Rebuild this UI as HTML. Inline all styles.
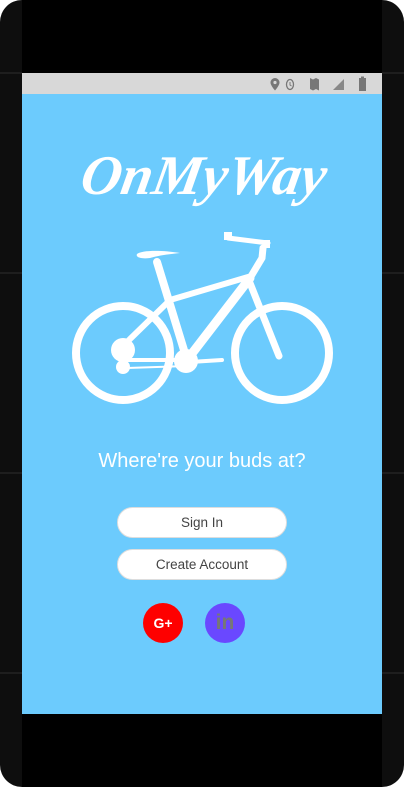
<!DOCTYPE html>
<html><head><meta charset="utf-8"><style>
html,body{margin:0;padding:0;background:#fff;width:404px;height:787px;overflow:hidden}
.frame{position:absolute;left:0;top:0;width:404px;height:787px;background:#0e0e0e;border-radius:22px}
.line{position:absolute;height:2px;background:#1e1e1e;width:404px;left:0}
.screen{position:absolute;left:22px;top:0;width:360px;height:787px;background:#000}
.status{position:absolute;left:22px;top:73px;width:360px;height:21px;background:#d8d8d8}
.blue{position:absolute;left:22px;top:94px;width:360px;height:620px;background:#6ccbfd}
.title{position:absolute;left:24px;width:360px;top:144px;text-align:center;color:#fff;font-family:"Liberation Serif",serif;font-style:italic;font-weight:bold;font-size:56px;letter-spacing:0px;transform:skewX(-10deg)}
.tag{position:absolute;left:22px;width:360px;top:450px;text-align:center;color:#fff;font-family:"Liberation Sans",sans-serif;font-size:20px}
.btn{position:absolute;left:117px;width:170px;height:31px;background:#fff;border:1px solid #ddd;border-radius:16px;box-sizing:border-box;text-align:center;line-height:30px;color:#444;font-family:"Liberation Sans",sans-serif;font-size:13.5px}
.c{position:absolute;width:40px;height:40px;border-radius:50%;text-align:center;line-height:40px;font-family:"Liberation Sans",sans-serif;font-weight:bold}
</style></head><body>
<div class="frame"></div>
<div class="line" style="top:72px"></div><div class="line" style="top:272px"></div><div class="line" style="top:472px"></div><div class="line" style="top:672px"></div>
<div class="screen"></div>
<div class="status">
<svg width="360" height="21" style="position:absolute;left:0;top:0">
<g fill="#777">
<path d="M253 5a4.5 4.5 0 0 1 4.5 4.5c0 3-4.5 8-4.5 8s-4.5-5-4.5-8a4.5 4.5 0 0 1 4.5-4.5z"/><circle cx="253" cy="9.5" r="1.6" fill="#d8d8d8"/>
<ellipse cx="268" cy="11.5" rx="3.5" ry="5" fill="none" stroke="#777" stroke-width="1.3"/><path d="M268 9v3l1.5 1" stroke="#777" fill="none"/>
<path d="M288 5l3 1.5 3-1.5 3 1.5v11l-3-1.5-3 1.5-3-1.5z"/>
<path d="M322 17h-11l11-11z" fill="#888"/>
<rect x="337" y="5" width="7" height="13"/><rect x="339" y="3.5" width="3" height="2"/>
</g></svg></div>
<div class="blue"></div>
<div class="title">OnMyWay</div>
<svg width="404" height="787" style="position:absolute;left:0;top:0">
<g stroke="#fff" fill="none" stroke-linecap="round">
<circle cx="123" cy="353" r="47" stroke-width="8"/>
<circle cx="282" cy="353" r="47" stroke-width="8"/>
<path d="M157 262L187 360" stroke-width="8"/>
<path d="M170 300L248 277" stroke-width="6"/>
<path d="M187 360L250 278" stroke-width="9"/>
<path d="M248 278L279 356" stroke-width="7"/>
<path d="M250 278L262 258L263 248" stroke-width="7"/>
<path d="M228 238L268 243" stroke-width="5"/>
<path d="M127 342L168 302" stroke-width="6"/>
<path d="M127 360L187 360" stroke-width="4"/>
<path d="M127 368L187 366" stroke-width="2"/>
<path d="M190 362L222 360" stroke-width="4"/>
</g>
<g fill="#fff">
<path d="M137 254c5-4 25-4 43-1c-8 1-20 2-30 5c-7 1-15 0-13-4z"/>
<rect x="224" y="232" width="8" height="8"/><rect x="263" y="240" width="7" height="8"/>
<circle cx="123" cy="350" r="12"/><circle cx="123" cy="367" r="7"/>
<circle cx="186" cy="361" r="12"/>
</g></svg>
<div class="tag">Where're your buds at?</div>
<div class="btn" style="top:507px">Sign In</div>
<div class="btn" style="top:549px">Create Account</div>
<div class="c" style="left:143px;top:603px;background:#fe0000;color:#fff;font-size:14px">G+</div>
<div class="c" style="left:205px;top:603px;background:#6a48ff;color:#777;font-size:21px">in</div>
</body></html>
